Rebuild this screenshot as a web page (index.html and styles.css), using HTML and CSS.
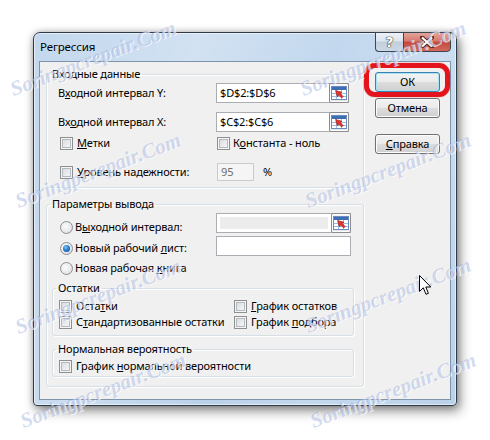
FILE: index.html
```html
<!DOCTYPE html>
<html lang="ru">
<head>
<meta charset="utf-8">
<title>Регрессия</title>
<link rel="stylesheet" href="styles.css">
</head>
<body>
<div class="window">
  <div class="titlebar">
    <span class="title">Регрессия</span>
    <div class="caption-btns">
      <span class="cbtn help">?</span>
      <span class="cbtn close">
        <svg width="14" height="12" viewBox="0 0 14 12"><path d="M2 1.5L12 10.5M12 1.5L2 10.5" stroke="#5a2a24" stroke-width="4.2" stroke-linecap="square"/><path d="M2 1.5L12 10.5M12 1.5L2 10.5" stroke="#fff" stroke-width="2.2"/></svg>
      </span>
    </div>
  </div>
  <div class="client">
    <div class="left">
      <fieldset class="group g1">
        <legend>Входные данные</legend>
        <div class="g1-body">
          <div class="frow">
            <span class="lbl">В<u>х</u>одной интервал Y:</span>
            <div class="ref"><span class="ref-text">$D$2:$D$6</span><span class="refbtn"><svg width="16" height="14" viewBox="0 0 16 14"><rect x="0.5" y="0.5" width="15" height="13" fill="#fff" stroke="#6a8cc0"/><rect x="1" y="1" width="14" height="3" fill="#3d6db3"/><path d="M1 7.5H15M1 10.5H15M5.5 4V13M10.5 4V13" stroke="#9fb9de"/><path d="M4.5 4.5L11 6.2L9.3 7.6L12.2 10.5L10.7 12L7.8 9.1L6.4 10.9Z" fill="#e2332b" stroke="#9c1c12" stroke-width=".6"/></svg></span></div>
          </div>
          <div class="frow r2">
            <span class="lbl">Вх<u>о</u>дной интервал X:</span>
            <div class="ref"><span class="ref-text">$C$2:$C$6</span><span class="refbtn"><svg width="16" height="14" viewBox="0 0 16 14"><rect x="0.5" y="0.5" width="15" height="13" fill="#fff" stroke="#6a8cc0"/><rect x="1" y="1" width="14" height="3" fill="#3d6db3"/><path d="M1 7.5H15M1 10.5H15M5.5 4V13M10.5 4V13" stroke="#9fb9de"/><path d="M4.5 4.5L11 6.2L9.3 7.6L12.2 10.5L10.7 12L7.8 9.1L6.4 10.9Z" fill="#e2332b" stroke="#9c1c12" stroke-width=".6"/></svg></span></div>
          </div>
          <div class="crow r3">
            <label class="chk first"><span class="cb"></span><span><u>М</u>етки</span></label>
            <label class="chk second"><span class="cb"></span><span>К<u>о</u>нстанта - ноль</span></label>
          </div>
          <div class="crow r4">
            <label class="chk first"><span class="cb"></span><span><u>У</u>ровень надежности:</span></label>
            <div class="lvl"><span class="lvl-box">95</span><span class="pct">%</span></div>
          </div>
        </div>
      </fieldset>

      <fieldset class="group g2">
        <legend>Параметры вывода</legend>
        <div class="g2-body">
          <div class="out">
            <div class="radios">
              <label class="rad"><span class="rb"></span><span>В<u>ы</u>ходной интервал:</span></label>
              <label class="rad rsel"><span class="rb on"><span class="dot"></span></span><span>Новый рабочий <u>л</u>ист:</span></label>
              <label class="rad"><span class="rb"></span><span>Новая рабочая <u>к</u>нига</span></label>
            </div>
            <div class="outs">
              <div class="ref dis"><span class="ref-text"></span><span class="refbtn"><svg width="16" height="14" viewBox="0 0 16 14"><rect x="0.5" y="0.5" width="15" height="13" fill="#fff" stroke="#6a8cc0"/><rect x="1" y="1" width="14" height="3" fill="#3d6db3"/><path d="M1 7.5H15M1 10.5H15M5.5 4V13M10.5 4V13" stroke="#9fb9de"/><path d="M4.5 4.5L11 6.2L9.3 7.6L12.2 10.5L10.7 12L7.8 9.1L6.4 10.9Z" fill="#e2332b" stroke="#9c1c12" stroke-width=".6"/></svg></span></div>
              <div class="sheet"></div>
            </div>
          </div>

          <fieldset class="group sub g-res">
            <legend>Остатки</legend>
            <div class="sub-body">
              <div class="srow">
                <label class="chk"><span class="cb"></span><span>Оста<u>т</u>ки</span></label>
                <label class="chk"><span class="cb"></span><span><u>Г</u>рафик остатков</span></label>
              </div>
              <div class="srow">
                <label class="chk"><span class="cb"></span><span>С<u>т</u>андартизованные остатки</span></label>
                <label class="chk"><span class="cb"></span><span>График <u>п</u>одбора</span></label>
              </div>
            </div>
          </fieldset>

          <fieldset class="group sub g-norm">
            <legend>Нормальная вероятность</legend>
            <div class="sub-body norm-body">
              <label class="chk"><span class="cb"></span><span>График <u>н</u>ормальной вероятности</span></label>
            </div>
          </fieldset>
        </div>
      </fieldset>
    </div>

    <div class="buttons">
      <div class="btn default">ОК<span class="ring"></span></div>
      <div class="btn">Отмена</div>
      <div class="btn help-btn"><u>С</u>правка</div>
    </div>
  </div>
</div>

<div class="wm w1">Soringpcrepair.Com</div>
<div class="wm w2">Soringpcrepair.Com</div>
<div class="wm w3">Soringpcrepair.Com</div>
<div class="wm w4">Soringpcrepair.Com</div>
<div class="wm w5">Soringpcrepair.Com</div>
<div class="wm w6">Soringpcrepair.Com</div>
<div class="wm w7">Soringpcrepair.Com</div>
<div class="wm w8">Soringpcrepair.Com</div>

<svg class="cursor" width="13" height="21" viewBox="0 0 13 21"><path d="M0.5 0.5V16.5L4.3 12.8L7 19.3L9.4 18.3L6.8 12H11.8Z" fill="#fff" stroke="#000" stroke-width="1" stroke-linejoin="miter"/></svg>
</body>
</html>
```

FILE: styles.css
```css
* { box-sizing: border-box; }
html, body { margin: 0; }
body {
  position: relative;
  width: 490px;
  height: 440px;
  overflow: hidden;
  background: #fff;
  padding: 32px 0 0 33px;
  font-family: "Noto Sans", "DejaVu Sans", sans-serif;
  font-size: 11px;
  letter-spacing: -0.15px;
  line-height: 14px;
  color: #000;
}
u { text-decoration: underline; text-underline-offset: 1px; text-decoration-thickness: 1px; }

.window {
  width: 424px;
  height: 374px;
  border: 1px solid #2e3a47;
  border-radius: 7px 7px 4px 4px;
  padding: 0 5px 5px;
  display: flex;
  flex-direction: column;
  background:
    linear-gradient(110deg, rgba(255,255,255,0) 0%, rgba(255,255,255,.25) 30%, rgba(255,255,255,0) 55%, rgba(255,255,255,.15) 75%, rgba(255,255,255,0) 100%),
    linear-gradient(#c3d8ee, #bad2ea);
  box-shadow: inset 0 0 0 1px rgba(255,255,255,.55), 3px 5px 12px rgba(0,0,0,.45), 0 0 6px rgba(0,0,0,.25);
}
.titlebar {
  height: 28px;
  display: flex;
  justify-content: space-between;
  align-items: flex-start;
}
.title { padding: 7px 0 0 1px; color: #000; font-size: 11.5px; }
.caption-btns { display: flex; margin-top: -1px; }
.cbtn {
  height: 20px;
  border: 1px solid #3b4652;
  display: flex;
  align-items: center;
  justify-content: center;
}
.help {
  width: 28px;
  border-right: none;
  border-radius: 0 0 0 4px;
  background: linear-gradient(#eef2f7 0%, #dbe3ed 45%, #c2cedc 50%, #ccd8e6 100%);
  font-family: "DejaVu Sans", sans-serif;
  font-size: 14px;
  color: #fff;
  font-weight: bold;
  text-shadow: 0 0 1px #333, 0 0 1px #333, 0 0 1px #333;
}
.close {
  width: 48px;
  border-radius: 0 0 4px 0;
  background: linear-gradient(#e3a498 0%, #d6776b 45%, #c4473b 50%, #d26a5a 100%);
}

.client {
  flex: 1;
  border: 1px solid #7f93a9;
  background: #f0f0f0;
  display: flex;
  align-items: flex-start;
  padding: 5px 0 0 6px;
}
.left { width: 318px; }

.group {
  margin: 0;
  padding: 0;
  min-width: 0;
  border: 1px solid #d5dfe5;
  border-radius: 3px;
  box-shadow: inset 1px 1px 0 #fff, 1px 1px 0 #fff;
}
.group legend {
  padding: 0 2px;
  margin-left: 3px;
  line-height: 14px;
}

.g1-body { padding: 2px 13px 6px 11px; }
.frow {
  display: flex;
  align-items: center;
  height: 20px;
}
.frow.r2 { margin-top: 9px; }
.lbl { width: 158px; }
.ref {
  width: 133px;
  height: 20px;
  border: 1px solid #abadb3;
  border-right: none;
  background: #fff;
  display: flex;
  align-items: center;
}
.ref-text { flex: 1; padding-left: 3px; }
.refbtn {
  width: 20px;
  height: 20px;
  border: 1px solid #8c8c8c;
  border-radius: 2px;
  background: linear-gradient(#f6f6f6, #e4e4e4);
  box-shadow: inset 0 0 0 1px #fff;
  display: flex;
  align-items: center;
  justify-content: center;
}
.ref.dis .ref-text {
  align-self: stretch;
  margin: 3px 3px 3px 3px;
  background: #ececec;
}

.crow { display: flex; align-items: center; }
.crow.r3 { height: 16px; margin-top: 3px; }
.crow.r4 { height: 18px; margin-top: 12px; }
.chk { display: flex; align-items: center; gap: 4px; }
.chk.first { width: 158px; padding-left: 2px; }
.chk.second { margin-left: 1px; gap: 3px; }
.cb {
  width: 13px;
  height: 13px;
  flex: none;
  border: 1px solid #8e8f8f;
  background: linear-gradient(135deg, #d3d7dc, #fbfbfb);
  box-shadow: inset 0 0 0 1px #f5f5f5, inset 0 0 0 2px #b4b9bf;
}
.lvl { display: flex; align-items: center; margin-left: 1px; }
.lvl-box {
  width: 37px;
  height: 18px;
  border: 1px solid #c8cbd0;
  background: #f5f5f5;
  color: #6d6d6d;
  padding-left: 3px;
  line-height: 16px;
}
.pct { margin-left: 9px; }

.g2 { margin-top: 9px; }
.g2-body { padding: 2px 8px 9px 5px; }
.out { display: flex; align-items: flex-start; }
.radios {
  width: 164px;
  padding: 4px 0 0 8px;
  display: flex;
  flex-direction: column;
}
.rad { display: flex; align-items: center; gap: 2px; height: 20px; }
.rad.rsel { margin-top: 1px; }
.rb {
  width: 13px;
  height: 13px;
  flex: none;
  border: 1px solid #8e8f8f;
  border-radius: 50%;
  background: radial-gradient(circle at 40% 40%, #fbfbfb 0%, #e8eaed 55%, #cfd3d8 100%);
  display: flex;
  align-items: center;
  justify-content: center;
}
.rb .dot {
  width: 7px;
  height: 7px;
  border-radius: 50%;
  background: radial-gradient(circle at 40% 35%, #7cc6f5 0%, #2a7fd0 45%, #0d3f86 100%);
}
.outs { display: flex; flex-direction: column; gap: 3px; }
.outs .ref { width: 135px; }
.sheet {
  width: 135px;
  height: 20px;
  border: 1px solid #abadb3;
  background: #fff;
}

.sub { width: 302px; }
.g-res { margin-top: 3px; }
.g-norm { margin-top: 6px; }
.sub-body { padding: 3px 0 5px 6px; }
.norm-body { padding: 2px 0 2px 6px; height: 20px; display: flex; align-items: center; }
.srow { display: flex; align-items: center; height: 16px; }
.srow .chk:first-child { width: 175px; }

.buttons {
  margin: 5px 0 0 11px;
  display: flex;
  flex-direction: column;
  width: 65px;
}
.btn {
  position: relative;
  height: 20px;
  border: 1px solid #707070;
  border-radius: 3px;
  background: linear-gradient(#f2f2f2 0%, #ebebeb 48%, #dddddd 52%, #cfcfcf 100%);
  box-shadow: inset 0 0 0 1px #fcfcfc;
  display: flex;
  align-items: center;
  justify-content: center;
}
.btn + .btn { margin-top: 6px; }
.btn.help-btn { margin-top: 16px; }
.btn.default {
  border-color: #3c7fb1;
  box-shadow: inset 0 0 0 1px #a6e3f7;
}
.ring {
  position: absolute;
  left: -12px;
  top: -10px;
  width: 86px;
  height: 34px;
  border: 5px solid #e3141c;
  border-radius: 11px;
  box-shadow: 0 0 1px #b00;
}

.wm {
  position: absolute;
  font-family: "Liberation Serif", serif;
  font-style: italic;
  font-weight: bold;
  font-size: 21px;
  line-height: 22px;
  letter-spacing: 0;
  color: rgba(140, 160, 215, 0.38);
  text-shadow: 1px 1px 0 rgba(255,255,255,.7);
  transform: rotate(-21deg);
  transform-origin: 0 100%;
  white-space: nowrap;
  pointer-events: none;
}
.w1 { left: 15px; top: 78px; }
.w2 { left: 305px; top: 78px; }
.w3 { left: 20px; top: 190px; }
.w4 { left: 310px; top: 190px; }
.w5 { left: 20px; top: 316px; }
.w6 { left: 310px; top: 315px; }
.w7 { left: 25px; top: 410px; }
.w8 { left: 315px; top: 410px; }

.cursor { position: absolute; left: 419px; top: 275px; }
```
